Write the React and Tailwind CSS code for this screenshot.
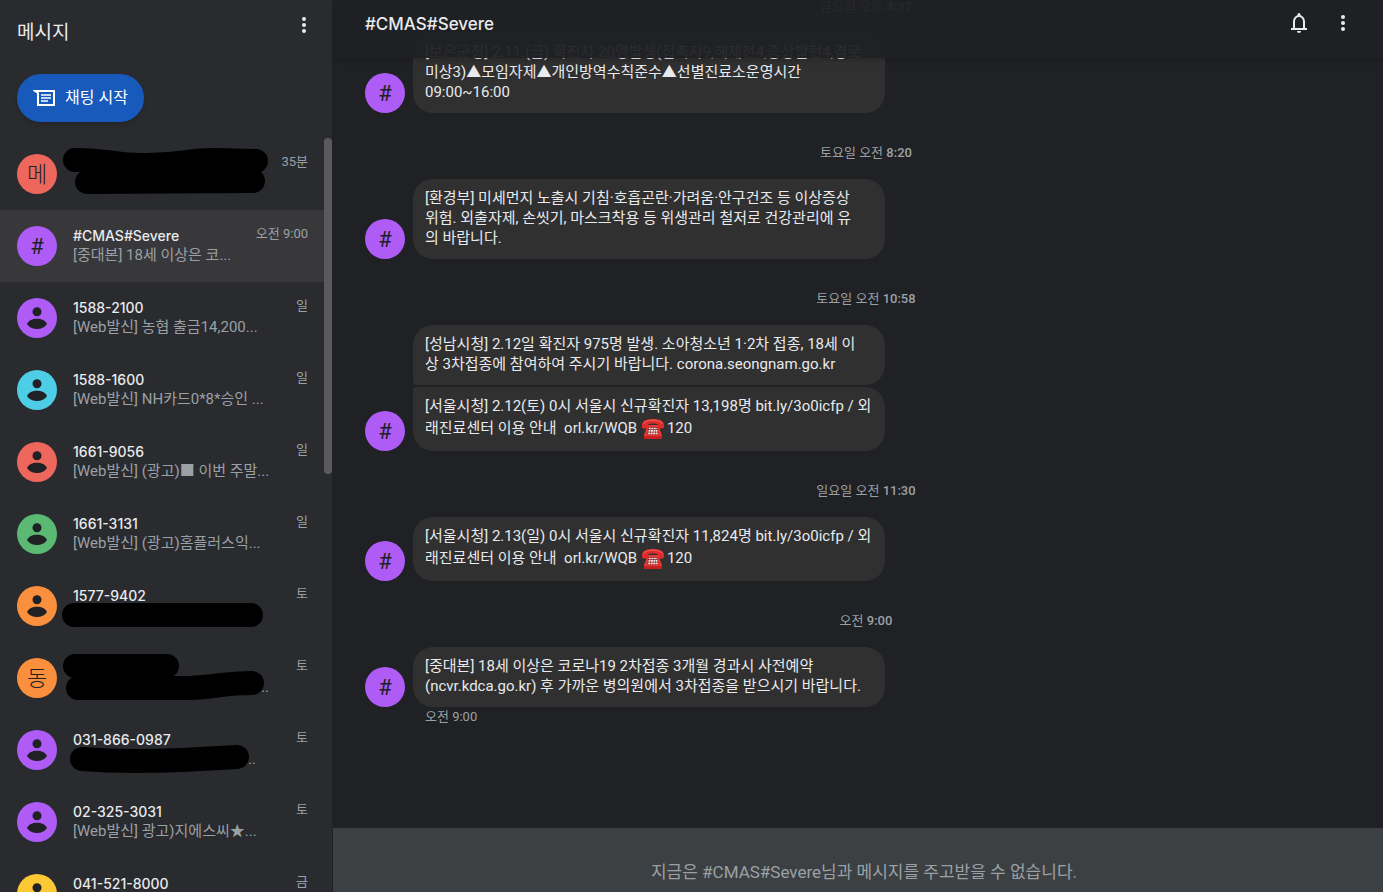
import clsx from 'clsx';

const conversations = [
    { id: 1, letter: '메', color: 'bg-[#ee675c]', name: '', preview: '', time: '35분', marks: ['M75 22C100 21 115 27 140 27C180 28 190 21 215 22L256 23', 'M87 44L253 43'] },
    { id: 2, letter: '#', color: 'bg-[#af5cf7]', name: '#CMAS#Severe', preview: '[중대본] 18세 이상은 코...', time: '오전 9:00', active: true },
    { id: 3, color: 'bg-[#af5cf7]', name: '1588-2100', preview: '[Web발신] 농협 출금14,200...', time: '일' },
    { id: 4, color: 'bg-[#4ecde6]', name: '1588-1600', preview: '[Web발신] NH카드0*8*승인 ...', time: '일' },
    { id: 5, color: 'bg-[#ee675c]', name: '1661-9056', preview: '[Web발신] (광고)■ 이번 주말...', time: '일' },
    { id: 6, color: 'bg-[#5bb974]', name: '1661-3131', preview: '[Web발신] (광고)홈플러스익...', time: '일' },
    { id: 7, color: 'bg-[#fa903e]', name: '1577-9402', preview: '', time: '토', marks: ['M74 45L251 45'] },
    { id: 8, letter: '동', color: 'bg-[#fa903e]', name: '', preview: '...', indent: 'pl-[184px]', time: '토', marks: ['M75 24L167 24', 'M78 46L190 46C215 45 225 41 252 41'] },
    { id: 9, color: 'bg-[#af5cf7]', name: '031-866-0987', preview: '...', indent: 'pl-[171px]', time: '토', marks: ['M82 45C120 48 170 47 200 45L237 43'] },
    { id: 10, color: 'bg-[#af5cf7]', name: '02-325-3031', preview: '[Web발신] 광고)지에스씨★...', time: '토' },
    { id: 11, color: 'bg-[#fcc934]', name: '041-521-8000', preview: '', time: '금' },
];

const groups = [
    {
        time: '금요일 오후 4:37',
        messages: [['[보은군청] 2.11.(금) 확진자 20명발생(접촉자9,해제전4,증상발현4,경로', '미상3)▲모임자제▲개인방역수칙준수▲선별진료소운영시간', '09:00~16:00']],
    },
    {
        time: '토요일 오전 8:20',
        messages: [['[환경부] 미세먼지 노출시 기침·호흡곤란·가려움·안구건조 등 이상증상', '위험. 외출자제, 손씻기, 마스크착용 등 위생관리 철저로 건강관리에 유', '의 바랍니다.']],
    },
    {
        time: '토요일 오전 10:58',
        messages: [
            ['[성남시청] 2.12일 확진자 975명 발생. 소아청소년 1·2차 접종, 18세 이', '상 3차접종에 참여하여 주시기 바랍니다. corona.seongnam.go.kr'],
            ['[서울시청] 2.12(토) 0시 서울시 신규확진자 13,198명 bit.ly/3o0icfp / 외', '래진료센터 이용 안내  orl.kr/WQB ☎120'],
        ],
    },
    {
        time: '일요일 오전 11:30',
        messages: [['[서울시청] 2.13(일) 0시 서울시 신규확진자 11,824명 bit.ly/3o0icfp / 외', '래진료센터 이용 안내  orl.kr/WQB ☎120']],
    },
    {
        time: '오전 9:00',
        messages: [['[중대본] 18세 이상은 코로나19 2차접종 3개월 경과시 사전예약', '(ncvr.kdca.go.kr) 후 가까운 병의원에서 3차접종을 받으시기 바랍니다.']],
    },
];

function MoreIcon() {
    return (
        <svg viewBox="0 0 24 24" className="size-6" fill="currentColor" aria-hidden="true">
            <circle cx="12" cy="6" r="2" />
            <circle cx="12" cy="12" r="2" />
            <circle cx="12" cy="18" r="2" />
        </svg>
    );
}

function BellIcon() {
    return (
        <svg viewBox="0 0 24 24" className="size-6" fill="none" stroke="currentColor" strokeWidth="2" aria-hidden="true">
            <path d="M7 18v-7.500a5 5.500 0 0 1 10 0V18M4 18h16" />
            <path d="M10 20h4a2 2 0 0 1-4 0zM10.500 5V3.500a1.500 1.500 0 0 1 3 0V5z" fill="currentColor" stroke="none" />
        </svg>
    );
}

function ChatIcon() {
    return (
        <svg viewBox="0 0 24 24" className="size-6" fill="none" stroke="currentColor" strokeWidth="2" aria-hidden="true">
            <path d="M2 5h19v14H5V7z" />
            <path d="M8 9h10M8 12h10M8 15h7" strokeWidth="1.500" />
        </svg>
    );
}

function PhoneEmoji() {
    return (
        <svg viewBox="0 0 24 24" className="mr-0.5 inline size-6 align-middle" role="img" aria-label="전화">
            <path d="M7 8h10l4 10v4H3v-4z" fill="#e53935" />
            <path d="M3 19h18v3H3z" fill="#c4201f" />
            <path d="M7.500 10h9l1 7.500h-11z" fill="#8e1b1b" />
            <path d="M7.800 11.500h8.400M7.500 13.900h9M7.200 16.300h9.600" stroke="#f5e6e6" strokeWidth="1.700" strokeDasharray="2 .5" />
            <path d="M1 8c0-4 4-6 11-6s11 2 11 6v2c0 1-1 1.500-3 1.500s-3-.5-3-1.500V8c0-1-2-1.500-5-1.500S7 7 7 8v2c0 1-1 1.500-3 1.500S1 11 1 10z" fill="#dd2c2c" />
            <path d="M2.500 7C4 4 8 3.200 12 3.200S20 4 21.500 7" stroke="#f4605a" strokeWidth="1" fill="none" />
        </svg>
    );
}

function Avatar({ letter, color }) {
    return (
        <span
            className={clsx(
                'flex size-10 shrink-0 items-center justify-center overflow-hidden rounded-full text-[22px] text-[#202124]',
                letter !== '#' && 'font-light',
                color
            )}
        >
            {letter || (
                <svg viewBox="0 0 40 40" className="size-10" fill="currentColor" aria-hidden="true">
                    <circle cx="20" cy="13.700" r="4.500" />
                    <path d="M10 26c1.500-3.300 5.500-5.200 10-5.200s8.500 1.900 10 5.200c-2 3.200-5.800 5-10 5s-8-1.800-10-5z" />
                </svg>
            )}
        </span>
    );
}

function Conversation({ item }) {
    return (
        <li>
            <a
                href="#"
                aria-current={item.active ? 'page' : undefined}
                className={clsx('relative flex h-[72px] gap-4 pt-4 pr-4 pl-[17px]', item.active && 'bg-[#38383a]')}
            >
                <Avatar letter={item.letter} color={item.color} />
                <span className="flex min-w-0 flex-1 flex-col">
                    <span className="h-5 font-['Inter','Noto_Sans_CJK_KR',sans-serif] text-sm leading-5 font-medium text-[#e8eaed]">{item.name}</span>
                    <span className={clsx('text-[15px] leading-[18px] whitespace-nowrap', item.indent)}>{item.preview}</span>
                </span>
                <span className="absolute right-4 text-[13px] leading-4">{item.time}</span>
                {item.marks && (
                    <svg viewBox="0 0 324 72" className="absolute inset-0 h-[72px] w-[324px]" fill="none" stroke="#000" strokeWidth="24" strokeLinecap="round" aria-hidden="true">
                        {item.marks.map((d) => (
                            <path key={d} d={d} />
                        ))}
                    </svg>
                )}
            </a>
        </li>
    );
}

function Line({ text }) {
    const [before, after] = text.split('☎');

    return (
        <span className={clsx('block whitespace-pre', after && 'h-6 leading-6')}>
            {before}
            {after && <PhoneEmoji />}
            {after}
        </span>
    );
}

function MessageGroup({ time, messages }) {
    return (
        <section>
            <p className="pt-8 pb-[18px] text-center font-['Roboto_Medium','Roboto','Noto_Sans_CJK_KR',sans-serif] text-[13px] leading-4">{time}</p>
            <div className="flex items-end gap-2">
                <Avatar letter="#" color="bg-[#af5cf7]" />
                <div className="flex w-[472px] flex-col gap-0.5">
                    {messages.map((lines, i) => (
                        <div
                            key={lines[0]}
                            className={clsx(
                                'rounded-[20px] bg-[#303030] px-3 pt-[9px] pb-[11px] text-[15px] leading-5 text-[#e8eaed]',
                                i > 0 && 'rounded-tl-sm',
                                i < messages.length - 1 && 'rounded-bl-sm'
                            )}
                        >
                            {lines.map((line) => (
                                <Line key={line} text={line} />
                            ))}
                        </div>
                    ))}
                </div>
            </div>
        </section>
    );
}

export default function App() {
    return (
        <div className="flex h-screen overflow-hidden bg-[#202124] font-['Roboto','Noto_Sans_CJK_KR',sans-serif] text-[#9aa0a6]">
            <aside className="flex w-[332px] shrink-0 flex-col bg-[#2a2b2e]">
                <div className="flex h-[45px] items-start justify-between pt-[13px] pr-4 pl-[17px] text-[#e8eaed]">
                    <h1 className="pt-1.5 text-[19px] leading-7">메시지</h1>
                    <button type="button" aria-label="메뉴">
                        <MoreIcon />
                    </button>
                </div>
                <div className="pt-[29px] pb-4 pl-[17px]">
                    <button type="button" className="flex h-12 items-center gap-2 rounded-full bg-[#185abc] px-4 text-base text-white shadow-md">
                        <ChatIcon />
                        채팅 시작
                    </button>
                </div>
                <div className="flex min-h-0 flex-1">
                    <ul className="min-w-0 flex-1 overflow-hidden">
                        {conversations.map((item) => (
                            <Conversation key={item.id} item={item} />
                        ))}
                    </ul>
                    <div className="h-[336px] w-2 rounded-full bg-[#5a5a5c]" />
                </div>
            </aside>

            <main className="relative flex min-w-0 flex-1 flex-col border-l border-[#202124]">
                <header className="absolute inset-x-0 top-0 z-10 flex h-[58px] items-start justify-between bg-[#202124]/95 pt-[11px] pr-7 pl-8 text-[#e8eaed] shadow-md">
                    <h2 className="pt-px font-['Inter',sans-serif] text-[17px] leading-6 font-medium">#CMAS#Severe</h2>
                    <div className="flex gap-5">
                        <button type="button" aria-label="알림">
                            <BellIcon />
                        </button>
                        <button type="button" aria-label="옵션 더보기">
                            <MoreIcon />
                        </button>
                    </div>
                </header>
                <div className="flex min-h-0 flex-1 flex-col justify-end overflow-hidden pr-4 pb-[103px] pl-8">
                    {groups.map((group) => (
                        <MessageGroup key={group.time} {...group} />
                    ))}
                    <p className="mt-0.5 pl-[60px] text-[13px] leading-4">오전 9:00</p>
                </div>
                <footer className="h-16 shrink-0 bg-[#3c4043] pt-8 pl-3 text-center text-[17px] leading-6">
                    지금은 #CMAS#Severe님과 메시지를 주고받을 수 없습니다.
                </footer>
            </main>
        </div>
    );
}
